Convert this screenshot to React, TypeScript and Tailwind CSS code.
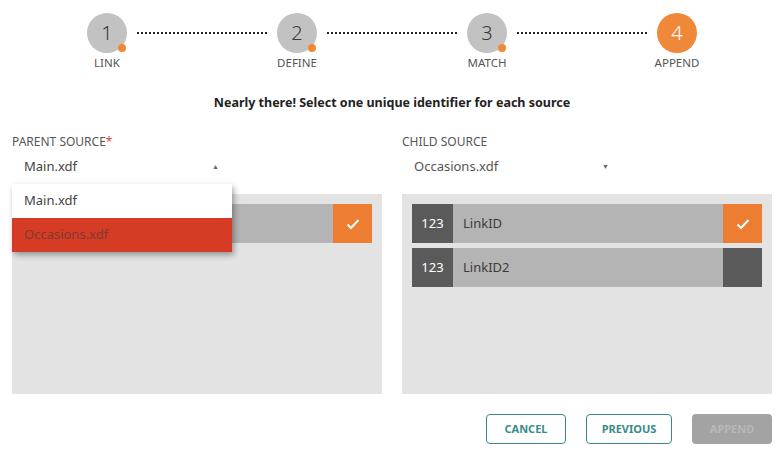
import React from 'react';

const font = { fontFamily: '"Noto Sans", "Open Sans", sans-serif' };

const steps = [
  { n: 1, label: 'LINK', done: true },
  { n: 2, label: 'DEFINE', done: true },
  { n: 3, label: 'MATCH', done: true },
  { n: 4, label: 'APPEND', done: false },
];

const Check = () => (
  <svg width="14" height="12" viewBox="0 0 14 12" fill="none">
    <path d="M1.5 6.5 L5 10 L12.5 2" stroke="white" strokeWidth="2" />
  </svg>
);

const Stepper = () => (
  <div className="flex items-start px-[77px] pt-[13px]">
    {steps.map((s, i) => (
      <React.Fragment key={s.n}>
        <div className="w-[60px] flex flex-col items-center shrink-0">
          <div
            className={`relative w-10 h-10 rounded-full flex items-center justify-center text-[20px] font-light ${
              s.done ? 'bg-[#c2c2c2] text-[#3a3a3a]' : 'bg-[#f0883a] text-white'
            }`}
          >
            {s.n}
            {s.done && <span className="absolute left-[31px] top-[31px] w-2 h-2 rounded-full bg-[#f0883a]" />}
          </div>
          <div className="mt-[1px] text-[11.5px] text-[#555] whitespace-nowrap">{s.label}</div>
        </div>
        {i < steps.length - 1 && <div className="flex-1 mt-[19px] border-t-2 border-dotted border-[#222]" />}
      </React.Fragment>
    ))}
  </div>
);

const Field = ({ name, type, checked }: { name: string; type?: string; checked: boolean }) => (
  <div className="flex h-[39px]">
    {type && (
      <div className="w-[41px] bg-[#5a5a5a] text-white text-[13px] flex items-center justify-center">{type}</div>
    )}
    <div className="flex-1 bg-[#b4b4b4] text-[13px] text-[#3c3c3c] flex items-center pl-[10px]">{name}</div>
    <div className={`w-[39px] flex items-center justify-center ${checked ? 'bg-[#ed7d31]' : 'bg-[#5a5a5a]'}`}>
      {checked && <Check />}
    </div>
  </div>
);

export default function App() {
  return (
    <div className="w-[784px] h-[457px] bg-white text-[#333] overflow-hidden" style={font}>
      <Stepper />
      <div className="text-center font-bold text-[12.5px] text-[#222] mt-[23px]">
        Nearly there! Select one unique identifier for each source
      </div>
      <div className="flex gap-5 px-3 mt-[21px]">
        {/* parent */}
        <div className="w-[370px]">
          <div className="text-[12px] text-[#555] h-4 leading-4">
            PARENT SOURCE<span className="text-[#e0442c]">*</span>
          </div>
          <div className="relative w-[220px]">
            <div className="flex items-center justify-between h-[34px] pl-3 pr-[13px] text-[13px] text-[#444]">
              <span>Main.xdf</span>
              <span className="text-[7px] text-[#666]">▲</span>
            </div>
            <div className="absolute left-0 top-[34px] w-[220px] z-10 bg-white shadow-[2px_3px_6px_rgba(0,0,0,0.35)]">
              <div className="h-[34px] pl-3 flex items-center text-[13px] text-[#444]">Main.xdf</div>
              <div className="h-[34px] pl-3 flex items-center text-[13px] text-[#7d3b2f] bg-[#d63b25]">Occasions.xdf</div>
            </div>
          </div>
          <div className="h-[200px] bg-[#e3e3e3] mt-[10px] p-[10px]">
            <Field name="" checked />
          </div>
        </div>
        {/* child */}
        <div className="w-[370px]">
          <div className="text-[12px] text-[#555] h-4 leading-4">CHILD SOURCE</div>
          <div className="flex items-center justify-between w-[220px] h-[34px] pl-3 pr-[13px] text-[13px] text-[#555]">
            <span>Occasions.xdf</span>
            <span className="text-[7px] text-[#666]">▼</span>
          </div>
          <div className="h-[200px] bg-[#e3e3e3] mt-[10px] p-[10px] flex flex-col gap-[5px]">
            <Field name="LinkID" type="123" checked />
            <Field name="LinkID2" type="123" checked={false} />
          </div>
        </div>
      </div>
      <div className="flex justify-end gap-5 px-3 mt-5">
        <button className="w-[80px] h-[30px] border border-[#3a8a8a] rounded-sm text-[#3a8a8a] text-[11px] font-bold">
          CANCEL
        </button>
        <button className="w-[86px] h-[30px] border border-[#3a8a8a] rounded-sm text-[#3a8a8a] text-[11px] font-bold">
          PREVIOUS
        </button>
        <button className="w-[80px] h-[30px] rounded-sm bg-[#a3a3a3] text-[#b8b8b8] text-[11px] font-bold">
          APPEND
        </button>
      </div>
    </div>
  );
}
